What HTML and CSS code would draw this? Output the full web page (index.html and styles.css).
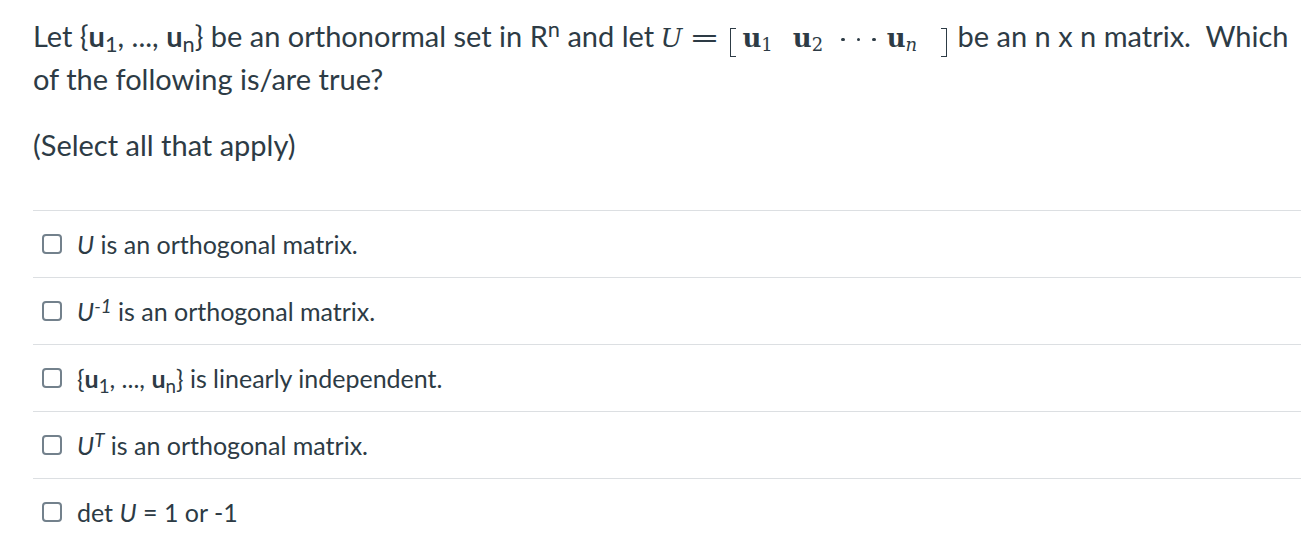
FILE: index.html
```html
<!DOCTYPE html>
<html>
<head>
<meta charset="utf-8">
<link rel="stylesheet" href="styles.css">
</head>
<body>
<div class="quiz">
  <div class="question">
    <p class="stem">Let {<b>u</b><sub>1</sub>, ..., <b>u</b><sub>n</sub>} be an orthonormal set in R<sup>n</sup> and let <span class="math"><span class="mi">U</span><span class="mo">=</span><span class="br br-l"></span><span class="mb">u</span><span class="msub">1</span><span class="mb mgap">u</span><span class="msub">2</span><span class="mdots"><span class="dot"></span><span class="dot"></span><span class="dot"></span></span><span class="mb">u</span><span class="msub mit">n</span><span class="br br-r"></span></span> be an n x n matrix.&nbsp; Which<br>of the following is/are true?</p>
    <p class="note">(Select all that apply)</p>
  </div>
  <ul class="answers">
    <li class="answer"><span class="cb"></span><span class="label"><i>U</i> is an orthogonal matrix.</span></li>
    <li class="answer"><span class="cb"></span><span class="label"><i>U</i><sup><i>-1</i></sup> is an orthogonal matrix.</span></li>
    <li class="answer"><span class="cb"></span><span class="label">{<b>u</b><sub>1</sub>, ..., <b>u</b><sub>n</sub>} is linearly independent.</span></li>
    <li class="answer"><span class="cb"></span><span class="label"><i>U</i><sup><i>T</i></sup> is an orthogonal matrix.</span></li>
    <li class="answer"><span class="cb"></span><span class="label">det <i>U</i> = 1 or -1</span></li>
  </ul>
</div>
</body>
</html>
```

FILE: styles.css
```css
html, body {
  margin: 0;
  padding: 0;
  background: #ffffff;
}
body {
  font-family: Lato, "Liberation Sans", sans-serif;
  color: #2d3b45;
}
.quiz {
  padding: 14px 8px 0 33px;
}
.question p {
  margin: 0;
}
.stem {
  font-size: 29px;
  line-height: 43px;
  white-space: nowrap;
}
.stem sub, .answer sub {
  font-size: 0.75em;
  vertical-align: -0.25em;
  line-height: 0;
}
.stem sup, .answer sup {
  font-size: 0.75em;
  vertical-align: 0.45em;
  line-height: 0;
}
.note {
  margin-top: 23px !important;
  font-size: 29px;
  line-height: 43px;
}
.math {
  font-family: "DejaVu Serif", "Liberation Serif", serif;
  font-size: 26px;
  line-height: 0;
  color: #2d3b45;
  white-space: nowrap;
  margin-left: -1px;
}
.mi {
  font-style: italic;
  margin-right: 10px;
}
.mo {
  display: inline-block;
  width: 25px;
  text-align: center;
  transform: scaleX(1.4);
  margin-right: 13px;
}
.br {
  display: inline-block;
  width: 6px;
  height: 29px;
  vertical-align: -10px;
  border-top: 1.5px solid #2d3b45;
  border-bottom: 1.5px solid #2d3b45;
  box-sizing: border-box;
}
.br-l {
  border-left: 1.5px solid #2d3b45;
  margin-right: 6px;
}
.br-r {
  border-right: 1.5px solid #2d3b45;
  margin-left: 24px;
  margin-right: 3px;
}
.mb {
  font-weight: bold;
}
.mgap {
  margin-left: 20px;
}
.msub {
  font-size: 18px;
  vertical-align: -4px;
}
.mit {
  font-style: italic;
}
.mdots {
  display: inline-block;
  margin: 0 11px 0 18px;
  vertical-align: 6px;
  line-height: 0;
}
.dot {
  display: inline-block;
  width: 3.5px;
  height: 3.5px;
  border-radius: 50%;
  background: #2d3b45;
  margin-right: 12px;
}
.dot:last-child {
  margin-right: 0;
}
.answers {
  list-style: none;
  margin: 44px 0 0 0;
  padding: 0;
  width: 1268px;
}
.answer {
  display: flex;
  align-items: center;
  height: 66px;
  border-top: 1px solid #dcdfe2;
  font-size: 25px;
  padding-left: 9px;
}
.cb {
  width: 20px;
  height: 20px;
  box-sizing: border-box;
  border: 2px solid #73818c;
  border-radius: 4px;
  margin-right: 15px;
  flex: none;
}
.label i {
  font-style: italic;
}
```
